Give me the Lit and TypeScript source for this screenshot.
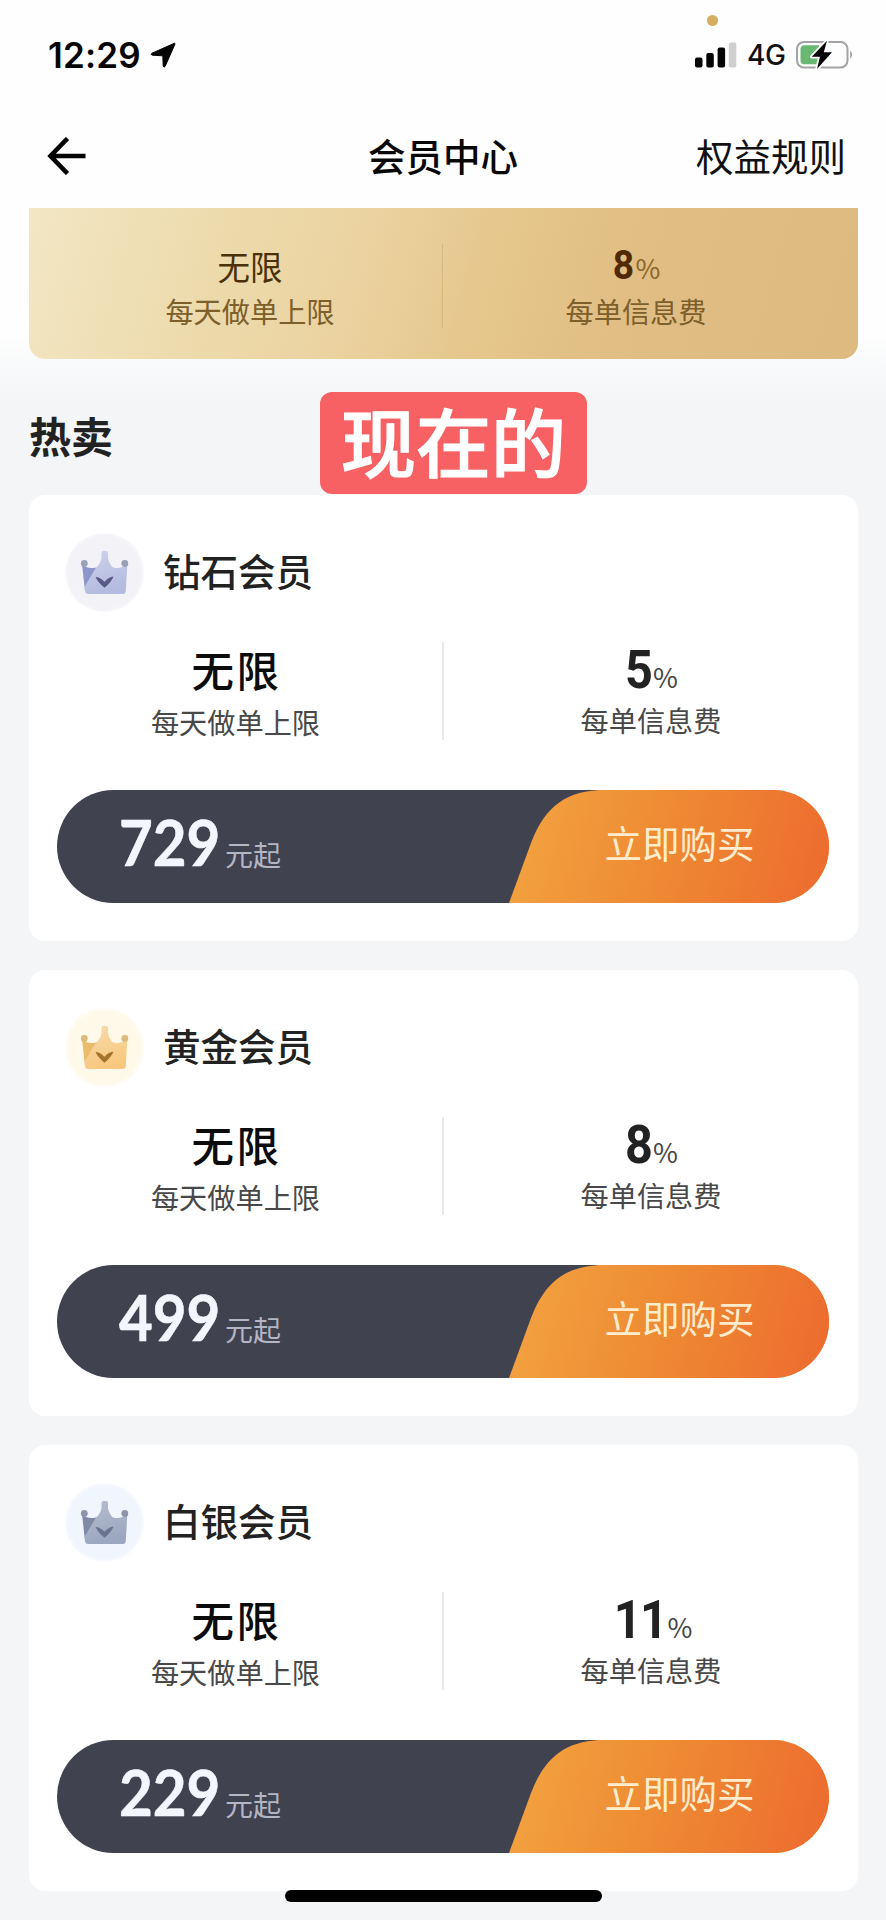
import { LitElement, html, css } from "lit";
import { customElement, property } from "lit/decorators.js";

interface Tone {
  halo: string;
  facet: string;
  top: string;
  bottom: string;
  tip: string;
  check: string;
}

interface Plan {
  id: string;
  name: string;
  fee: string;
  price: string;
  tone: Tone;
}

const PLANS: Plan[] = [
  {
    id: "diamond", name: "钻石会员", fee: "5", price: "729",
    tone: { halo: "#f2f2f7", facet: "#8c96cb", top: "#cfd1ea", bottom: "#b3bce0", tip: "#9aa0b8", check: "#585b85" },
  },
  {
    id: "gold", name: "黄金会员", fee: "8", price: "499",
    tone: { halo: "#fff9ea", facet: "#e9bd6c", top: "#f6dcae", bottom: "#f8c87f", tip: "#dcba7c", check: "#a5742f" },
  },
  {
    id: "silver", name: "白银会员", fee: "11", price: "229",
    tone: { halo: "#f1f5fd", facet: "#8089a5", top: "#b6bfce", bottom: "#9ba7c0", tip: "#8d95aa", check: "#69738f" },
  },
];

@customElement("crown-icon")
class CrownIcon extends LitElement {
  @property({ attribute: false }) tone!: Tone;

  static styles = css`
    :host { display: block; width: 79px; height: 79px; }
    svg { display: block; }
  `;

  render() {
    const t = this.tone;
    return html`
      <svg width="79" height="79" viewBox="0 0 79 79">
        <defs>
          <linearGradient id="body" x1="0" y1="0" x2="0.3" y2="1">
            <stop offset="0" stop-color=${t.top} />
            <stop offset="1" stop-color=${t.bottom} />
          </linearGradient>
          <radialGradient id="halo">
            <stop offset="0.9" stop-color=${t.halo} />
            <stop offset="1" stop-color=${t.halo} stop-opacity="0.5" />
          </radialGradient>
        </defs>
        <circle cx="39.5" cy="39.5" r="39.5" fill="url(#halo)" />
        <path d="M17 31 Q22 36.500 31 34.500 L40 50 L20 58 Z" fill=${t.facet} />
        <path
          d="M36.500 20 Q36.500 18 38.500 18 H41 Q43 18 43 20 V25 Q44 31 48 34.500 Q56 36.500 62.300 31 L60.800 58 Q60.600 61 57.800 61 H23 Q20.300 61 20.100 58 L19.800 53.500 L31 34.500 Q35.500 31 36.500 25 Z"
          fill="url(#body)"
        />
        <circle cx="19.300" cy="30.5" r="3.4" fill=${t.tip} />
        <circle cx="59.800" cy="30.5" r="3.4" fill=${t.tip} />
        <path d="M30.500 44 Q35 44 39.500 48.800 Q44 43.800 48.500 43.500 Q46.500 49 39.500 54.800 Q33 49.500 30.500 44 Z" fill=${t.check} />
      </svg>
    `;
  }
}

@customElement("plan-card")
class PlanCard extends LitElement {
  @property({ attribute: false }) plan!: Plan;

  static styles = css`
    :host {
      display: flex;
      flex-direction: column;
      box-sizing: border-box;
      height: 446.5px;
      padding: 38.500px 29px 0 28px;
      border-radius: 16px;
      background: #fff;
    }
    .head { display: flex; align-items: center; gap: 19px; height: 79px; padding-left: 8px; }
    .name { font-size: 37.5px; line-height: 44px; font-weight: 500; color: #222; margin-top: -6px; }
    .stats { display: grid; grid-template-columns: 413px 2px 1fr; height: 98px; margin: 30px -29px 0 -28px; }
    .rule { background: #e9e9ec; }
    .stat { display: flex; flex-direction: column; align-items: center; white-space: nowrap; }
    .big { font-size: 42.5px; font-weight: 500; line-height: 50px; letter-spacing: 2.5px; color: #0c0c0c; margin-top: 2px; padding-left: 2px; }
    .label { font-size: 28.2px; line-height: 34px; color: #484848; margin-top: 11px; }
    .fee { display: flex; align-items: baseline; height: 50px; line-height: 56px; color: #222; }
    .num { font-family: "Roboto", sans-serif; font-weight: 700; font-size: 54px; letter-spacing: -2px; transform: scaleX(0.9); transform-origin: right; }
    .pct { font-size: 27px; color: #444; margin-left: 2px; margin-right: 2px; }
    .pill {
      display: grid;
      grid-template-columns: 452px 1fr;
      height: 113px;
      margin-top: 50px;
      border-radius: 57px;
      overflow: hidden;
      background: linear-gradient(90deg, #414250 0 58%, #414250 58% 70%, #f18035 70%);
    }
    .price { display: flex; align-items: baseline; padding-left: 62px; line-height: 104px; white-space: nowrap; }
    .amount { font-family: "Lato", sans-serif; font-weight: 700; font-size: 64px; color: #f3f6ff; width: 101px; transform: scaleX(0.91); transform-origin: left; -webkit-text-stroke: 0.6px #f3f6ff; }
    .unit { font-size: 28px; color: #b4b5c5; margin-left: 5px; }
    .buy {
      font: inherit;
      border: 0;
      padding: 0 0 13px 21px;
      font-size: 37.5px;
      color: #ffeccd;
      background: linear-gradient(105deg, #f2a03f 8%, #ee8a33 48%, #ed6d2f 95%);
      clip-path: path("M0 113 L22 53 C36 16 58 0 96 0 H320 V113 Z");
    }
  `;

  render() {
    const p = this.plan;
    return html`
      <div class="head">
        <crown-icon .tone=${p.tone}></crown-icon>
        <div class="name">${p.name}</div>
      </div>
      <div class="stats">
        <div class="stat">
          <div class="big">无限</div>
          <div class="label">每天做单上限</div>
        </div>
        <div class="rule"></div>
        <div class="stat">
          <div class="fee"><span class="num">${p.fee}</span><span class="pct">%</span></div>
          <div class="label">每单信息费</div>
        </div>
      </div>
      <div class="pill">
        <div class="price"><span class="amount">${p.price}</span><span class="unit">元起</span></div>
        <button class="buy">立即购买</button>
      </div>
    `;
  }
}

@customElement("app-root")
class AppRoot extends LitElement {
  static styles = css`
    :host {
      display: block;
      position: relative;
      box-sizing: border-box;
      height: 1920px;
      overflow: hidden;
      font-family: "Noto Sans CJK SC", sans-serif;
      background: linear-gradient(180deg, #fefefe 0 330px, #f3f5f7 405px);
    }
    .status { display: flex; align-items: center; height: 109px; padding: 0 32px 0 48px; box-sizing: border-box; }
    .time { font-family: "Inter", sans-serif; font-weight: 600; font-size: 35px; line-height: 40px; letter-spacing: 0.2px; color: #050505; width: 102px; }
    .grow { flex: 1; }
    .net { font-family: "Inter", sans-serif; font-weight: 500; font-size: 28px; line-height: 34px; width: 49px; letter-spacing: -0.5px; color: #111; }
    .mic { position: absolute; left: 707px; top: 15px; width: 11px; height: 11px; border-radius: 50%; background: #d6ae63; }
    .nav { display: grid; grid-template-columns: 1fr auto 1fr; align-items: center; height: 99px; padding: 0 40px 5px 47px; box-sizing: border-box; }
    .title { font-size: 37.5px; font-weight: 500; line-height: 44px; color: #080808; margin: -3px 7px 0 0; }
    .rules { font-size: 37.5px; line-height: 44px; text-align: right; color: #111; margin-top: -2px; }
    .banner {
      display: grid;
      grid-template-columns: 384px 1px 1fr;
      height: 151px;
      margin: 0 28px 0 29px;
      padding: 0 29px;
      box-sizing: border-box;
      border-radius: 0 0 16px 16px;
      background: linear-gradient(106deg, #f2e6c4 0%, #eddcae 20%, #ebd2a0 40%, #e5c68b 56%, #e0bd82 74%, #ddba80 100%);
    }
    .bar { background: #d6b77c; margin: 36px 0 31px; }
    .cell { display: flex; flex-direction: column; align-items: center; padding-top: 39px; white-space: nowrap; }
    .top { font-size: 32.5px; line-height: 38px; height: 40px; color: #4a3108; }
    .sub { font-size: 28.2px; line-height: 34px; color: #7d5f2c; margin-top: 7px; }
    .rate { display: flex; align-items: baseline; }
    .num { font-family: "Roboto", sans-serif; font-weight: 700; font-size: 40px; color: #4f2a05; transform: scaleX(0.93); }
    .pct { font-size: 27px; color: #8a662c; margin-left: 1px; }
    .section { display: flex; height: 135.5px; box-sizing: border-box; padding: 33px 29px 0; }
    .hot { font-size: 42px; font-weight: 700; line-height: 50px; margin-top: 18px; color: #222; width: 291px; }
    .tag {
      width: 267px; height: 102px; border-radius: 12px; background: #f86163; color: #fff;
      font-size: 75px; line-height: 96px; font-weight: 500; text-align: center; white-space: nowrap;
      -webkit-text-stroke: 1.2px #fff;
    }
    .list { display: flex; flex-direction: column; gap: 28.500px; margin: 0 28px 0 29px; }
    .home { position: absolute; left: 285px; top: 1890px; width: 317px; height: 12px; border-radius: 6px; background: #000; }
  `;

  render() {
    return html`
      <div class="status">
        <div class="time">12:29</div>
        <svg width="26" height="26" viewBox="0 0 26 26">
          <path d="M24.500 1.200 Q25.300 1.200 24.900 2.300 L15.200 24.200 Q13.800 26.300 13.200 23.800 L12.800 13.800 L2.500 13.200 Q0 12.600 2 11.200 Z" fill="#050505" stroke="#050505" stroke-width="1" stroke-linejoin="round" />
        </svg>
        <div class="grow"></div>
        <svg width="52" height="26" viewBox="0 0 52 26">
          <rect x="0" y="15.500" width="7.500" height="10" rx="2" fill="#050505" />
          <rect x="11.300" y="11" width="7.500" height="14.500" rx="2" fill="#050505" />
          <rect x="22.600" y="5.500" width="7.500" height="20" rx="2" fill="#050505" />
          <rect x="33.800" y="0.500" width="7.500" height="25" rx="2" fill="#cfcfd1" />
        </svg>
        <div class="net">4G</div>
        <svg width="58" height="30" viewBox="0 0 58 30">
          <rect x="1" y="2" width="50.500" height="25.500" rx="7" fill="none" stroke="#a3a3a3" stroke-width="2" />
          <path d="M54.300 10.500 Q57.500 14.700 54.300 19 Z" fill="#8d8d8d" />
          <path d="M8.500 5.300 H23 V24.300 H8.500 Q4.500 24.300 4.500 20.300 V9.300 Q4.500 5.300 8.500 5.300 Z" fill="#68b871" />
          <path d="M31 0.800 L15.800 16.700 H24 L21 29 L36 12.300 H27.800 Z" fill="#050505" stroke="#fefefe" stroke-width="3.600" stroke-linejoin="round" paint-order="stroke" />
        </svg>
      </div>
      <div class="mic"></div>
      <div class="nav">
        <svg width="40" height="38" viewBox="0 0 40 38">
          <path d="M20.500 1.500 L3.500 19 L20.500 36.500 M3.500 19 H38.500" fill="none" stroke="#050505" stroke-width="4.600" />
        </svg>
        <div class="title">会员中心</div>
        <div class="rules">权益规则</div>
      </div>
      <div class="banner">
        <div class="cell">
          <div class="top">无限</div>
          <div class="sub">每天做单上限</div>
        </div>
        <div class="bar"></div>
        <div class="cell">
          <div class="top rate"><span class="num">8</span><span class="pct">%</span></div>
          <div class="sub">每单信息费</div>
        </div>
      </div>
      <div class="section">
        <div class="hot">热卖</div>
        <div class="tag">现在的</div>
      </div>
      <div class="list">${PLANS.map((p) => html`<plan-card .plan=${p}></plan-card>`)}</div>
      <div class="home"></div>
    `;
  }
}
